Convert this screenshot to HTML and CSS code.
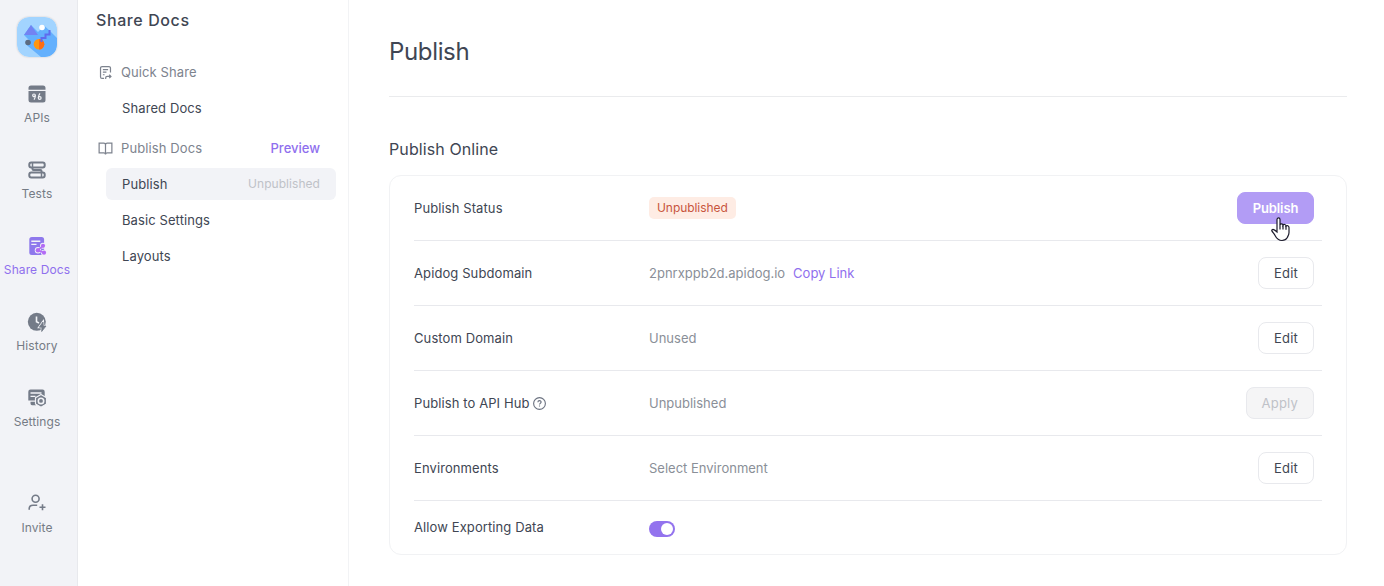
FILE: index.html
```html
<!DOCTYPE html>
<html lang="en">
<head>
<meta charset="utf-8">
<title>Share Docs</title>
<link rel="stylesheet" href="styles.css">
</head>
<body>
<div class="app">
  <nav class="rail">
    <svg class="logo" viewBox="0 0 40 40">
      <defs><clipPath id="tile"><rect width="40" height="40" rx="12"/></clipPath></defs>
      <g clip-path="url(#tile)">
        <rect width="40" height="40" fill="#a2d4ff"/>
        <path d="M14 8 21 15 23 13 27 8.500 32.500 13.500 40 21V40H24L9 27.500 13 24 7 18Z" fill="#64b0fd"/>
        <path d="M7 18H21L14 8Z" fill="#7383f2"/>
        <circle cx="25" cy="10.500" r="2.800" fill="#fff"/>
        <circle cx="11" cy="25.500" r="2.800" fill="#5c6b80"/>
        <circle cx="22" cy="27.300" r="5.300" fill="#ff9610"/>
        <path d="M22 22a5.300 5.300 0 0 1 0 10.600Z" fill="#ff6d12"/>
        <path d="M24.500 25V21H28.500V17.500H32.500V13" fill="none" stroke="#5f6aed" stroke-width="2"/>
      </g>
    </svg>
    <a class="rail-item"><svg class="rail-icon" viewBox="0 0 20 20">
      <path d="M1.500 6V4a2.500 2.500 0 0 1 2.500-2.500H16A2.500 2.500 0 0 1 18.500 4V5.700H1.500Z" fill="#747b88"/>
      <path d="M1.500 7H18.500V16A2.500 2.500 0 0 1 16 18.500H4A2.500 2.500 0 0 1 1.500 16Z" fill="#747b88"/>
      <g fill="none" stroke="#f2f3f7" stroke-width="1.200"><circle cx="7" cy="11.300" r="1.300"/><path d="M8.300 11.300Q8.300 14 7 15.700M13 9.300Q11.300 11.500 11.300 13.800"/><circle cx="12.700" cy="14" r="1.400"/></g></svg>
      <span>APIs</span></a>
    <a class="rail-item"><svg class="rail-icon" viewBox="0 0 20 20" fill="none" stroke="#747b88" stroke-width="2">
      <rect x="2.300" y="2.500" width="15.400" height="5" rx="2"/><rect x="2.300" y="12.500" width="15.400" height="5" rx="2"/>
      <path d="M5.500 3V7M14.500 13V17" stroke-width="1.500"/><path d="M5.500 8V9Q5.500 10 6.500 10H13.500Q14.500 10 14.500 11V12.500" stroke-width="2"/></svg>
      <span>Tests</span></a>
    <a class="rail-item active"><svg class="rail-icon" viewBox="0 0 20 20">
      <rect x="2.300" y="1" width="14.800" height="18" rx="2.500" fill="#8e78ec"/>
      <path d="M4.300 5.200H13.300M4.300 8.400H9.500" stroke="#f2f3f7" stroke-width="1.400"/>
      <g fill="#f2f3f7"><circle cx="16" cy="9.800" r="3"/><circle cx="11" cy="14.200" r="3.200"/><circle cx="17" cy="16.700" r="3"/></g>
      <path d="M16 9.800 11 14.200 17 16.700" fill="none" stroke="#b36bf5" stroke-width="1.500"/>
      <g fill="#b36bf5"><circle cx="16" cy="9.800" r="2.100"/><circle cx="11" cy="14.200" r="2.300"/><circle cx="17" cy="16.700" r="2.100"/></g></svg>
      <span>Share Docs</span></a>
    <a class="rail-item"><svg class="rail-icon" viewBox="0 0 20 20">
      <circle cx="9.800" cy="9.800" r="9" fill="#747b88"/>
      <path d="M9.500 4.500V9.800L12 11" fill="none" stroke="#f2f3f7" stroke-width="1.600"/>
      <path d="M16 10 12.300 15.200H14.900L14.700 19.500 19 14H16.300Z" fill="#747b88" stroke="#f2f3f7" stroke-width="2.200"/>
      <path d="M16 10 12.300 15.200H14.900L14.700 19.500 19 14H16.300Z" fill="#747b88" stroke="#747b88" stroke-width=".8"/></svg>
      <span>History</span></a>
    <a class="rail-item"><svg class="rail-icon" viewBox="0 0 20 20">
      <path d="M1.300 12.500V3.700A2.200 2.200 0 0 1 3.500 1.500H15.500A2.200 2.200 0 0 1 17.700 3.700V12.500ZM3.500 13.700H9V17.200H5Q3.500 17.200 3.500 15.500Z" fill="#747b88"/>
      <path d="M3.500 5H14.500M3.500 8.300H8.500" stroke="#f2f3f7" stroke-width="1.300"/>
      <path d="M14 6.500 19.500 9.700V16L14 19.200 8.500 16V9.700Z" fill="#747b88" stroke="#f2f3f7" stroke-width="1.200" stroke-linejoin="round"/>
      <circle cx="14" cy="12.900" r="2.700" fill="#747b88" stroke="#f2f3f7" stroke-width="1.600"/></svg>
      <span>Settings</span></a>
    <a class="rail-item invite"><svg class="rail-icon" viewBox="0 0 20 20" fill="none" stroke="#747b88" stroke-width="1.600">
      <circle cx="8.600" cy="4.800" r="3.500"/><path d="M2.200 15.800V14.800C2.200 12.500 3.800 11.200 6 11.200H10.200M12.500 13.300H18.500M15.500 10.300V16.300"/></svg>
      <span>Invite</span></a>
  </nav>

  <aside class="side">
    <h2 class="side-title">Share Docs</h2>
    <div class="group"><svg class="group-icon" viewBox="0 0 16 16" fill="none" stroke="#7d838e" stroke-width="1.300">
      <path d="M13.300 8V3.300A1.600 1.600 0 0 0 11.700 1.700H4.300A1.600 1.600 0 0 0 2.700 3.300V12.700A1.600 1.600 0 0 0 4.300 14.300H6.500M5.200 5H10.800M5.200 7.700H9M5.200 10.400H7M8.200 14.800V13.700Q8.200 12.200 9.800 12.200H13.300M12 10.400 13.800 12.200 12 14"/></svg>
      <span>Quick Share</span></div>
    <a class="entry">Shared Docs</a>
    <div class="group docs"><svg class="group-icon" viewBox="0 0 16 16" fill="none" stroke="#7d838e" stroke-width="1.300">
      <path d="M8 4Q8 2.300 6.200 2.300H1.200V12.700H6.200Q8 12.700 8 14.500Q8 12.700 9.800 12.700H14.800V2.300H9.800Q8 2.300 8 4V14"/></svg>
      <span>Publish Docs</span><a class="preview">Preview</a></div>
    <a class="entry selected">Publish<span class="state">Unpublished</span></a>
    <a class="entry">Basic Settings</a>
    <a class="entry">Layouts</a>
  </aside>

  <main class="main">
    <h1 class="title">Publish</h1>
    <h3 class="section-title">Publish Online</h3>
    <section class="card">
      <div class="row"><div class="label">Publish Status</div><div class="value"><span class="tag">Unpublished</span></div>
        <button class="btn primary">Publish<svg class="cursor" viewBox="0 0 20 26">
          <path d="M6 2.500C6 .4 9 .4 9 2.500V7.800C9.300 6.300 12 6.500 12 8.200 12.700 7 15 7.300 15 9 16 8.100 18 8.800 18 10.500V15.500C18 18 16.700 19.300 16.300 20.500 15.200 22.600 13.500 23.500 11 23.500 7.200 23.500 5.500 21.200 4.200 18.700 3.200 16.700 1.800 15.500.9 13.900 .4 12.700 1.500 12.200 2.700 12.600 4.300 13.200 5.200 14.300 6 15Z" fill="#fff" stroke="#1b1a2b" stroke-width="1.200"/>
          <path d="M9 7.500V12.500M12 8.500V12.500M15 9V12.800" stroke="#1b1a2b" stroke-width="1.200"/></svg></button></div>
      <div class="row"><div class="label">Apidog Subdomain</div><div class="value"><span>2pnrxppb2d.apidog.io</span><a class="link">Copy Link</a></div><button class="btn">Edit</button></div>
      <div class="row"><div class="label">Custom Domain</div><div class="value">Unused</div><button class="btn">Edit</button></div>
      <div class="row"><div class="label">Publish to API Hub<svg class="help" viewBox="0 0 14 14" fill="none" stroke="#6b7280" stroke-width="1.050"><circle cx="7" cy="7" r="5.500"/><path d="M5.500 5.800C5.500 3.800 8.500 3.800 8.500 5.700 8.500 6.900 7 6.800 7 8M7 8.900V9.900"/></svg></div><div class="value">Unpublished</div><button class="btn disabled" disabled>Apply</button></div>
      <div class="row"><div class="label">Environments</div><div class="value">Select Environment</div><button class="btn">Edit</button></div>
      <div class="row last"><div class="label">Allow Exporting Data</div><div class="value"><span class="switch"></span></div></div>
    </section>
  </main>
</div>
</body>
</html>
```

FILE: styles.css
```css
* { box-sizing: border-box; }
body {
  margin: 0;
  font: 13px/20px Inter, "Liberation Sans", sans-serif;
  letter-spacing: 0.1px;
  color: #404653;
  background: #fff;
}
h1, h2, h3 { margin: 0; font-weight: 400; }
.app { display: flex; height: 586px; overflow: hidden; }

.rail {
  width: 78px;
  padding: 17px 3px 0 0;
  flex: none;
  display: flex;
  flex-direction: column;
  align-items: center;
  background: #f2f3f7;
  border-right: 1px solid #e8e9ed;
}
.logo { width: 40px; height: 40px; flex: none; margin-bottom: 27px; border-radius: 12px; box-shadow: 0 0 2px rgba(0, 0, 0, 0.2); }
.rail-item {
  height: 76px;
  flex: none;
  display: flex;
  flex-direction: column;
  align-items: center;
  gap: 4px;
  font-size: 12px;
  color: #757b85;
  white-space: nowrap;
}
.rail-icon { width: 20px; height: 20px; display: block; }
.active { color: #8f6fee; }
.invite { margin-top: 30px; }

.side {
  width: 271px;
  flex: none;
  padding: 10px 12px 0 18px;
  border-right: 1px solid #f2f3f5;
}
.side-title { font-size: 16px; font-weight: 500; line-height: 20px; margin-bottom: 24px; letter-spacing: 0.6px; }
.group {
  display: flex;
  align-items: center;
  height: 36px;
  gap: 8px;
  padding: 0 16px 0 2px;
  color: #7d838e;
}
.docs { margin-top: 6px; }
.group-icon { width: 15px; height: 15px; }
.preview { margin-left: auto; color: #8f6fee; font-weight: 500; letter-spacing: 0; }
.entry {
  display: flex;
  align-items: center;
  height: 32px;
  margin: 2px 0 4px 10px;
  padding: 0 16px;
  border-radius: 6px;
}
.selected { background: #f2f3f7; }
.state { margin-left: auto; font-size: 12px; letter-spacing: 0.05px; color: #bfc2c8; }

.main { flex: 1; padding: 36px 37px 0 40px; }
.title {
  height: 61px;
  font-size: 24px;
  line-height: 32px;
  letter-spacing: -0.35px;
  border-bottom: 1px solid #eaebed;
}
.section-title { font-size: 16px; line-height: 24px; margin: 40px 0 14px; }
.card {
  height: 380px;
  padding: 0 24px;
  border: 1px solid #f1f2f4;
  border-radius: 12px;
}
.row {
  display: flex;
  align-items: center;
  height: 65px;
  padding-right: 8px;
  border-bottom: 1px solid #e8e9ed;
}
.last { height: 53px; border-bottom: 0; }
.last .label { padding-bottom: 2px; }
.label { width: 235px; display: flex; align-items: center; gap: 2px; }
.value { flex: 1; display: flex; align-items: center; gap: 8px; letter-spacing: 0; color: #8a8f98; }
.link { color: #8f6fee; }
.help { width: 15px; height: 15px; }
.tag {
  height: 22px;
  padding: 0 8px;
  border-radius: 5px;
  font-size: 12px;
  line-height: 22px;
  letter-spacing: -0.06px;
  color: #c8553d;
  background: #feece4;
}
.btn {
  position: relative;
  height: 32px;
  padding: 0 15px;
  font: inherit;
  letter-spacing: 0.2px;
  color: #404653;
  background: #fff;
  border: 1px solid #e8e9ed;
  border-radius: 8px;
}
.primary { width: 77px; padding: 0; letter-spacing: -0.1px; color: #fff; font-weight: 600; background: #b29cf5; border-color: #b29cf5; }
.disabled { color: #bfc2c8; background: #f5f5f6; }
.cursor { position: absolute; left: 33px; top: 24px; width: 20px; height: 26px; }
.switch {
  display: flex;
  justify-content: flex-end;
  width: 26px;
  height: 16px;
  margin-top: 3px;
  padding: 2px;
  border-radius: 8px;
  background: #9373ee;
}
.switch::after { content: ""; width: 12px; height: 12px; border-radius: 50%; background: #fff; }
```
